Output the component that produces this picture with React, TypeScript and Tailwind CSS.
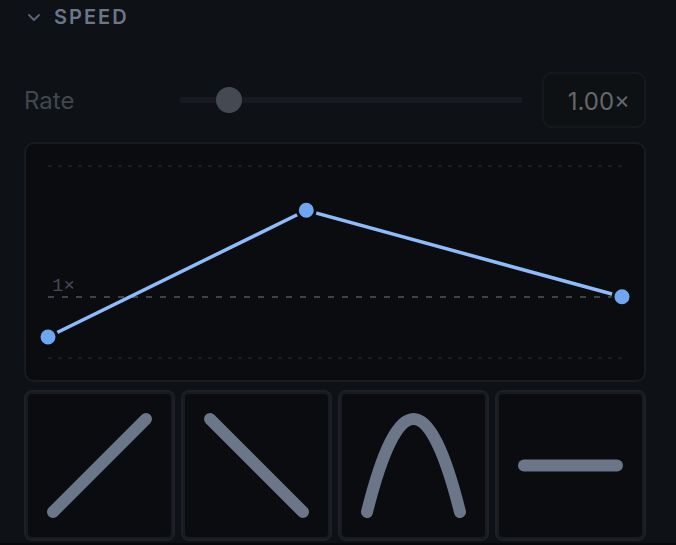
import { useState } from "react";

const INK = "#6b7688";

const PRESETS = [
  { name: "Ramp up", path: "M25 118 L118 25" },
  { name: "Ramp down", path: "M25 25 L118 118" },
  { name: "Arc", path: "M25 118 Q71.5 -68 118 118" },
  { name: "Flat", path: "M25 71.5 H118" }
];

const POINTS = [
  { x: 22, y: 193 },
  { x: 280.3, y: 66.3 },
  { x: 596, y: 152.8 }
];

function RateRow() {
  const [rate, setRate] = useState(1);

  return (
    <div className="flex items-center gap-5">
      <div className="flex flex-1 items-center">
        <label htmlFor="rate" className="w-[156px] shrink-0 pt-[2px] text-2xl text-[#42464d]">
          Rate
        </label>
        <input
          id="rate"
          type="range"
          min={0.1}
          max={8}
          step={0.01}
          value={rate}
          onChange={(event) => setRate(Number(event.target.value))}
          className="h-[26px] min-w-0 flex-1 appearance-none bg-transparent outline-none [&::-webkit-slider-runnable-track]:h-[6px] [&::-webkit-slider-runnable-track]:rounded-[1px] [&::-webkit-slider-runnable-track]:bg-[#171a20] [&::-webkit-slider-thumb]:-mt-[10px] [&::-webkit-slider-thumb]:size-[26px] [&::-webkit-slider-thumb]:appearance-none [&::-webkit-slider-thumb]:rounded-full [&::-webkit-slider-thumb]:bg-[#444a52]"
        />
      </div>
      <input
        type="text"
        aria-label="Rate value"
        readOnly
        value={`${rate.toFixed(2)}×`}
        className="h-14 w-[104px] rounded-[10px] border-2 border-[#15191c] bg-[#0d1113] pt-[2px] pr-[14px] text-right text-2xl text-[#65686b] outline-none"
      />
    </div>
  );
}

function SpeedCurve() {
  return (
    <div className="rounded-[10px] border-2 border-[#191b1f] bg-[#0b0c10]">
      <svg viewBox="0 0 618 236" className="block w-full" role="img" aria-label="Speed curve">
        <g fill="none" strokeWidth="2">
          <path d="M22 22 H596" stroke="#1b1d21" strokeDasharray="4 6" />
          <path d="M22 153 H596" stroke="#3f4349" strokeDasharray="6 8" />
          <path d="M22 214 H596" stroke="#1b1d21" strokeDasharray="4 6" />
        </g>
        <text x="26" y="147" fontSize="19" fill="#454b55" className="font-['Liberation_Mono',monospace]">
          1×
        </text>
        <polyline
          points={POINTS.map((point) => `${point.x},${point.y}`).join(" ")}
          fill="none"
          stroke="#8dbcfb"
          strokeWidth="3.5"
        />
        {POINTS.map((point) => (
          <circle key={point.x} cx={point.x} cy={point.y} r="9" fill="#6ea6f2" stroke="#0b0c10" strokeWidth="3" />
        ))}
      </svg>
    </div>
  );
}

export default function App() {
  const [open, setOpen] = useState(true);

  return (
    <main className="min-h-screen border-b-2 border-[#07080b] bg-[#0e1116] pr-[30px] pb-[2px] pl-6 font-['Inter',sans-serif]">
      <button
        type="button"
        aria-expanded={open}
        onClick={() => setOpen(!open)}
        className="flex h-[34px] items-center gap-[10px] text-xl font-semibold tracking-[2px] text-[#6b7688]"
      >
        <svg viewBox="0 0 20 20" className="size-5" fill="none" stroke="#5a6373" strokeWidth="2" strokeLinecap="round" strokeLinejoin="round">
          <path d="M5 8 L10 13 L15 8" />
        </svg>
        SPEED
      </button>

      {open ? (
        <section className="pt-[38px]">
          <RateRow />
          <div className="mt-[14px]">
            <SpeedCurve />
          </div>
          {/* Curve presets */}
          <div className="mt-2 grid grid-cols-4 gap-[6px]">
            {PRESETS.map((preset) => (
              <button
                key={preset.name}
                type="button"
                aria-label={preset.name}
                className="rounded-[8px] border-2 border-[#1d2127] bg-[#0b0c10]"
              >
                <span className="block rounded-[6px] border-2 border-[#191b1f]">
                  <svg viewBox="0 0 143 143" className="block w-full" fill="none" stroke={INK} strokeWidth="12" strokeLinecap="round">
                    <path d={preset.path} />
                  </svg>
                </span>
              </button>
            ))}
          </div>
        </section>
      ) : null}
    </main>
  );
}
